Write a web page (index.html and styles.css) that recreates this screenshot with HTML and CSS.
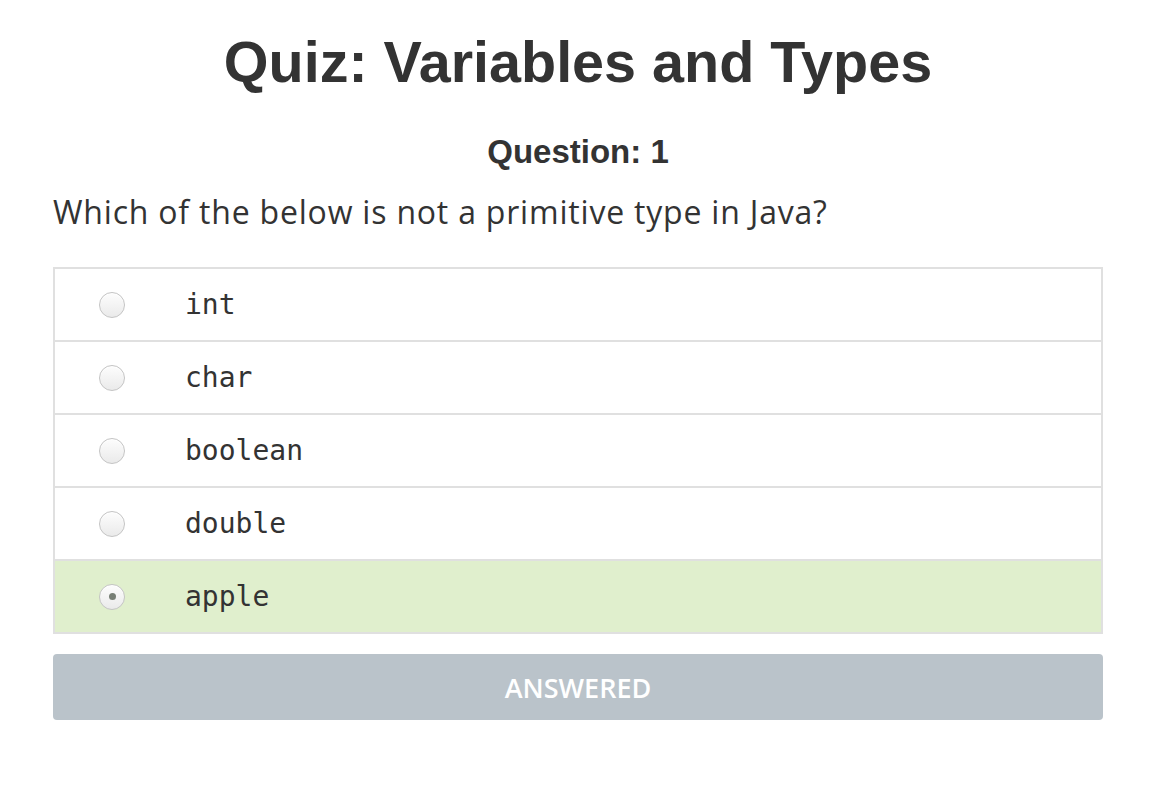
FILE: index.html
```html
<!DOCTYPE html>
<html lang="en">
<head>
  <meta charset="UTF-8">
  <title>Quiz</title>
  <link rel="stylesheet" href="styles.css">
</head>
<body>
  <div class="quiz">
    <h1 class="quiz-title">Quiz: Variables and Types</h1>
    <h2 class="question-number">Question: 1</h2>
    <p class="question-text">Which of the below is not a primitive type in Java?</p>

    <ul class="answers">
      <li class="answer"><span class="radio"></span><code>int</code></li>
      <li class="answer"><span class="radio"></span><code>char</code></li>
      <li class="answer"><span class="radio"></span><code>boolean</code></li>
      <li class="answer"><span class="radio"></span><code>double</code></li>
      <li class="answer selected"><span class="radio"></span><code>apple</code></li>
    </ul>

    <button class="answer-button" disabled>ANSWERED</button>
  </div>
</body>
</html>
```
FILE: styles.css
```css
body {
  margin: 0;
  background: #fff;
  color: #333;
  font-family: "Liberation Sans", Arial, sans-serif;
}

.quiz {
  width: 1050px;
  margin: 0 auto;
}

.quiz-title {
  font-size: 57.5px;
  font-weight: bold;
  text-align: center;
  margin: 0;
  padding-top: 28px;
  line-height: 68px;
}

.question-number {
  font-size: 33px;
  text-align: center;
  margin: 36px 0 0;
  line-height: 40px;
}

.question-text {
  font-family: "Open Sans", sans-serif;
  font-size: 32px;
  letter-spacing: 0.8px;
  margin: 20px 0 0;
  line-height: 40px;
}

.answers {
  list-style: none;
  margin: 35px 0 0;
  padding: 0;
  border: 2px solid #e0e0e0;
}

.answer {
  display: flex;
  align-items: center;
  height: 71px;
  border-top: 2px solid #e0e0e0;
}

.answer:first-child {
  border-top: none;
}

.answer.selected {
  background: #e0efcd;
}

.radio {
  width: 24px;
  height: 24px;
  margin-left: 44px;
  margin-right: 60px;
  border-radius: 50%;
  border: 1px solid #c4c4c4;
  background: linear-gradient(#fdfdfd, #eaeaea);
  box-shadow: inset 0 1px 1px #fff;
  display: flex;
  align-items: center;
  justify-content: center;
}

.selected .radio::after {
  content: "";
  width: 7px;
  height: 7px;
  border-radius: 50%;
  background: #777f75;
}

code {
  font-family: "DejaVu Sans Mono", monospace;
  font-size: 28px;
  color: #333;
}

.answer-button {
  display: block;
  width: 100%;
  height: 66px;
  margin-top: 20px;
  border: none;
  border-radius: 4px;
  background: #bac3ca;
  color: #fff;
  font-family: "Open Sans", sans-serif;
  font-weight: 600;
  font-size: 27px;
}
```
